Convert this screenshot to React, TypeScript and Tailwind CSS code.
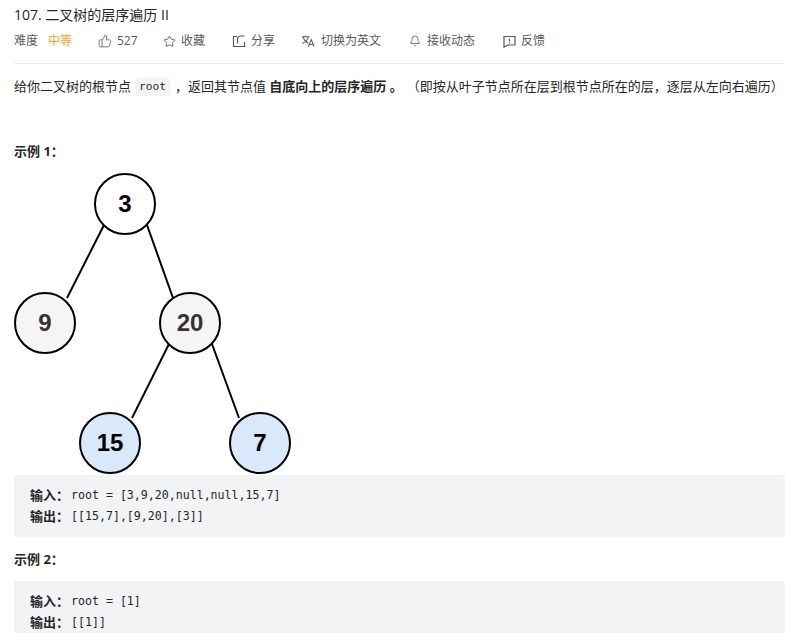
import { Bell, Star, ThumbsUp } from 'lucide-react';
import type { ReactNode } from 'react';

const cjk = "font-['Open_Sans','Noto_Sans_CJK_SC',sans-serif]";
const mono = "font-['DejaVu_Sans_Mono',monospace]";

function ShareIcon() {
  return (
    <svg width="14" height="14" viewBox="0 0 14 14" fill="none" stroke="currentColor" strokeWidth="1.2">
      <path d="M5 2.500H1.500v10h11V8" />
      <path d="M5.500 9.500V5.500C5.500 3.400 7 2 9 2h3.500" />
    </svg>
  );
}

function TranslateIcon() {
  return (
    <svg width="15" height="14" viewBox="0 0 15 14" fill="none" stroke="currentColor" strokeWidth="1.1">
      <path d="M1 2.500h8M5 1v1.500M2 2.500c1 3 3 5.500 6 7M8 2.500c-.8 3-3 5.500-6.500 7" />
      <path d="M8 13l3-7.500L14 13M9 10.800h4" />
    </svg>
  );
}

function FeedbackIcon() {
  return (
    <svg width="13" height="13" viewBox="0 0 13 13" fill="none" stroke="currentColor" strokeWidth="1.2">
      <path d="M1 1.500h11v8.500H4.500L1 12.200z" />
      <path d="M6.500 3.500v3M6.500 7.500v1" />
    </svg>
  );
}

function Action({ icon, label, className }: { icon: ReactNode; label: string; className: string }) {
  return (
    <div className={`flex items-center ${className}`}>
      <span className="flex w-[14px] justify-center">{icon}</span>
      <span>{label}</span>
    </div>
  );
}

function Tree() {
  const edges = [
    [104, 225, 67, 298],
    [147, 225, 173, 298],
    [169, 344, 132, 418],
    [212, 344, 239, 418],
  ];
  const nodes = [
    { x: 125, y: 204, label: '3', fill: '#ffffff', color: '#000000' },
    { x: 45, y: 323, label: '9', fill: '#f5f5f5', color: '#333333' },
    { x: 190, y: 323, label: '20', fill: '#f5f5f5', color: '#333333' },
    { x: 110, y: 443, label: '15', fill: '#dae8fc', color: '#000000' },
    { x: 260, y: 443, label: '7', fill: '#dae8fc', color: '#000000' },
  ];
  return (
    <svg width="300" height="305" viewBox="0 170 300 305" className="block">
      {edges.map((e, i) => (
        <line key={i} x1={e[0]} y1={e[1]} x2={e[2]} y2={e[3]} stroke="#000" strokeWidth="2" />
      ))}
      {nodes.map((n) => (
        <g key={n.label}>
          <circle cx={n.x} cy={n.y} r="30" fill={n.fill} stroke="#000" strokeWidth="2" />
          <text
            x={n.x}
            y={n.y + 8}
            textAnchor="middle"
            fontFamily="Liberation Sans, sans-serif"
            fontWeight="700"
            fontSize="24"
            fill={n.color}
          >
            {n.label}
          </text>
        </g>
      ))}
    </svg>
  );
}

function Example({ input, output }: { input: string; output: string }) {
  return (
    <div className="rounded-[3px] bg-[#f2f3f5] py-[10px] pl-4 text-[13px] text-[#262626]">
      <div className="flex h-[21px] items-center gap-[2px]">
        <b className="font-bold">输入：</b>
        <span className={`${mono} text-[11.6px]`}>{input}</span>
      </div>
      <div className="flex h-[21px] items-center gap-[2px]">
        <b className="font-bold">输出：</b>
        <span className={`${mono} text-[11.6px]`}>{output}</span>
      </div>
    </div>
  );
}

export default function App() {
  return (
    <div className={`${cjk} h-[633px] overflow-hidden bg-white pl-[14px] text-[#262626]`}>
      <div className="pt-[5px] text-[14px] leading-[20px]">107. 二叉树的层序遍历 II</div>

      <div className="mt-[6px] flex h-[20px] items-center text-[12px] text-[#595959]">
        <span className="w-[34px]">难度</span>
        <span className="w-[50px] text-[#ffa116]">中等</span>
        <Action icon={<ThumbsUp size={14} strokeWidth={1.3} />} label="527" className="w-[64px] gap-[5px]" />
        <Action icon={<Star size={13} strokeWidth={1.6} />} label="收藏" className="w-[70px] gap-[5px]" />
        <Action icon={<ShareIcon />} label="分享" className="w-[69px] gap-[5px]" />
        <Action icon={<TranslateIcon />} label="切换为英文" className="w-[107px] gap-[6px]" />
        <Action icon={<Bell size={12} strokeWidth={1.6} />} label="接收动态" className="w-[94px] gap-[5px]" />
        <Action icon={<FeedbackIcon />} label="反馈" className="gap-[5px]" />
      </div>

      <div className="mt-[12px] h-px bg-[#ebebeb]" />

      <p className="mt-[14px] flex h-[18px] items-center whitespace-nowrap text-[13px] text-[#262626]">
        给你二叉树的根节点
        <code className={`${mono} ml-[4px] mr-[5px] rounded-[3px] bg-[#f2f3f5] px-[4px] py-[2px] text-[11.2px] leading-[14px]`}>root</code>
        ，返回其节点值&nbsp;<b className="font-bold">自底向上的层序遍历</b>&nbsp;<b className="font-bold">。</b>
        <span className="ml-[4px]">（即按从叶子节点所在层到根节点所在的层，逐层从左向右遍历）</span>
      </p>

      <div className="mt-[46px] text-[13px] font-bold leading-[18px]">示例 1：</div>

      <div className="-ml-[14px] mt-[10px]">
        <Tree />
      </div>

      <Example input="root = [3,9,20,null,null,15,7]" output="[[15,7],[9,20],[3]]" />

      <div className="mt-[13px] text-[13px] font-bold leading-[18px]">示例 2：</div>

      <div className="mt-[13px]">
        <Example input="root = [1]" output="[[1]]" />
      </div>
    </div>
  );
}
